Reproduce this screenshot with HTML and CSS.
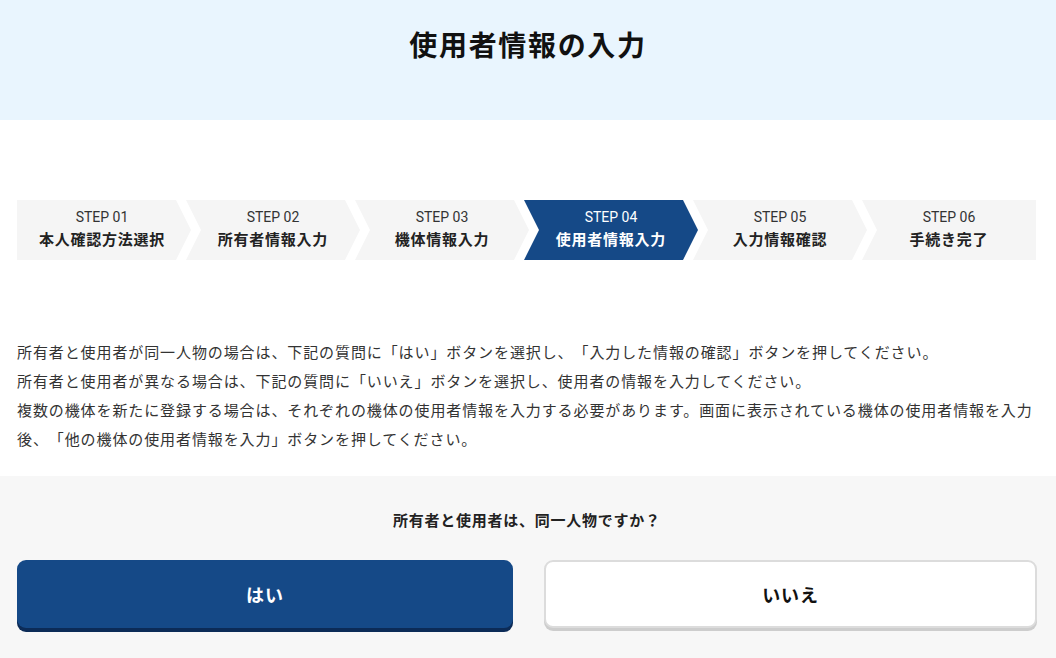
FILE: index.html
```html
<!DOCTYPE html>
<html lang="ja">
<head>
<meta charset="utf-8">
<title>使用者情報の入力</title>
<link rel="stylesheet" href="styles.css">
</head>
<body>
	<div class="page-head">
		<h1>使用者情報の入力</h1>
	</div>

	<div class="container">
		<ol class="steps">
			<li class="step first"><span class="num">STEP 01</span><span class="label">本人確認方法選択</span></li>
			<li class="step"><span class="num">STEP 02</span><span class="label">所有者情報入力</span></li>
			<li class="step"><span class="num">STEP 03</span><span class="label">機体情報入力</span></li>
			<li class="step current"><span class="num">STEP 04</span><span class="label">使用者情報入力</span></li>
			<li class="step"><span class="num">STEP 05</span><span class="label">入力情報確認</span></li>
			<li class="step last"><span class="num">STEP 06</span><span class="label">手続き完了</span></li>
		</ol>

		<p class="lead">
			所有者と使用者が同一人物の場合は、下記の質問に「はい」ボタンを選択し、「入力した情報の確認」ボタンを押してください。<br>
			所有者と使用者が異なる場合は、下記の質問に「いいえ」ボタンを選択し、使用者の情報を入力してください。<br>
			複数の機体を新たに登録する場合は、それぞれの機体の使用者情報を入力する必要があります。画面に表示されている機体の使用者情報を入力後、「他の機体の使用者情報を入力」ボタンを押してください。
		</p>
	</div>

	<div class="question">
		<p class="question-text">所有者と使用者は、同一人物ですか？</p>
		<div class="answers">
			<button type="button" class="btn btn-yes">はい</button>
			<button type="button" class="btn btn-no">いいえ</button>
		</div>
	</div>
</body>
</html>
```

FILE: styles.css
```css
body {
	margin: 0;
	font-family: "Noto Sans CJK JP", "Noto Sans", sans-serif;
	color: #222;
	background: #fff;
	text-spacing-trim: space-all;
}

.page-head {
	background: #e9f5fe;
	height: 120px;
	display: flex;
	justify-content: center;
	padding-top: 24px;
	box-sizing: border-box;
}
.page-head h1 {
	margin: 0;
	font-size: 28px;
	line-height: 40px;
	letter-spacing: 0.06em;
	font-weight: bold;
	color: #111;
}

.container {
	padding: 0 19px 0 17px;
}

/* step bar */
.steps {
	list-style: none;
	margin: 80px 0 0;
	padding: 0;
	display: flex;
}
.step {
	width: 174px;
	height: 60px;
	flex: none;
	margin-left: -5px;
	padding-bottom: 3px;
	box-sizing: border-box;
	background: #f5f5f5;
	color: #222;
	display: flex;
	flex-direction: column;
	align-items: center;
	justify-content: center;
	clip-path: polygon(0 0, calc(100% - 15px) 0, 100% 50%, calc(100% - 15px) 100%, 0 100%, 15px 50%);
}
.step.first {
	margin-left: 0;
	padding-right: 4px;
	clip-path: polygon(0 0, calc(100% - 15px) 0, 100% 50%, calc(100% - 15px) 100%, 0 100%);
}
.step.last {
	clip-path: polygon(0 0, 100% 0, 100% 100%, 0 100%, 15px 50%);
}
.step .num {
	font-family: Roboto, "Noto Sans", sans-serif;
	font-size: 14px;
	line-height: 20px;
	color: #333;
}
.step .label {
	font-size: 15px;
	line-height: 23px;
	font-weight: bold;
	letter-spacing: 0.05em;
}
.step.current {
	background: #154987;
	color: #fff;
}
.step.current .num { color: #fff; }

.lead {
	margin: 77px 0 23px;
	font-size: 15px;
	line-height: 29px;
	letter-spacing: 0.06em;
	color: #333;
}

/* question area */
.question {
	background: #f7f7f7;
	padding: 32px 19px 40px 17px;
	min-height: 200px;
}
.question-text {
	margin: 0 0 28px;
	text-align: center;
	font-size: 15px;
	line-height: 24px;
	font-weight: bold;
	letter-spacing: 0.05em;
}
.answers {
	display: flex;
	gap: 31px;
}
.btn {
	flex: 1;
	height: 68px;
	border-radius: 9px;
	font-family: "Noto Sans CJK JP", sans-serif;
	font-size: 18px;
	font-weight: bold;
	letter-spacing: 0.05em;
	cursor: pointer;
	box-sizing: border-box;
}
.btn-yes {
	flex: none;
	width: 496px;
	background: #154987;
	color: #fff;
	border: none;
	box-shadow: 0 4px 0 #0c2b57;
}
.btn-no {
	background: #fff;
	color: #111;
	border: 2px solid #dcdcdc;
	box-shadow: 0 3px 0 #cdcdcd;
}
```
